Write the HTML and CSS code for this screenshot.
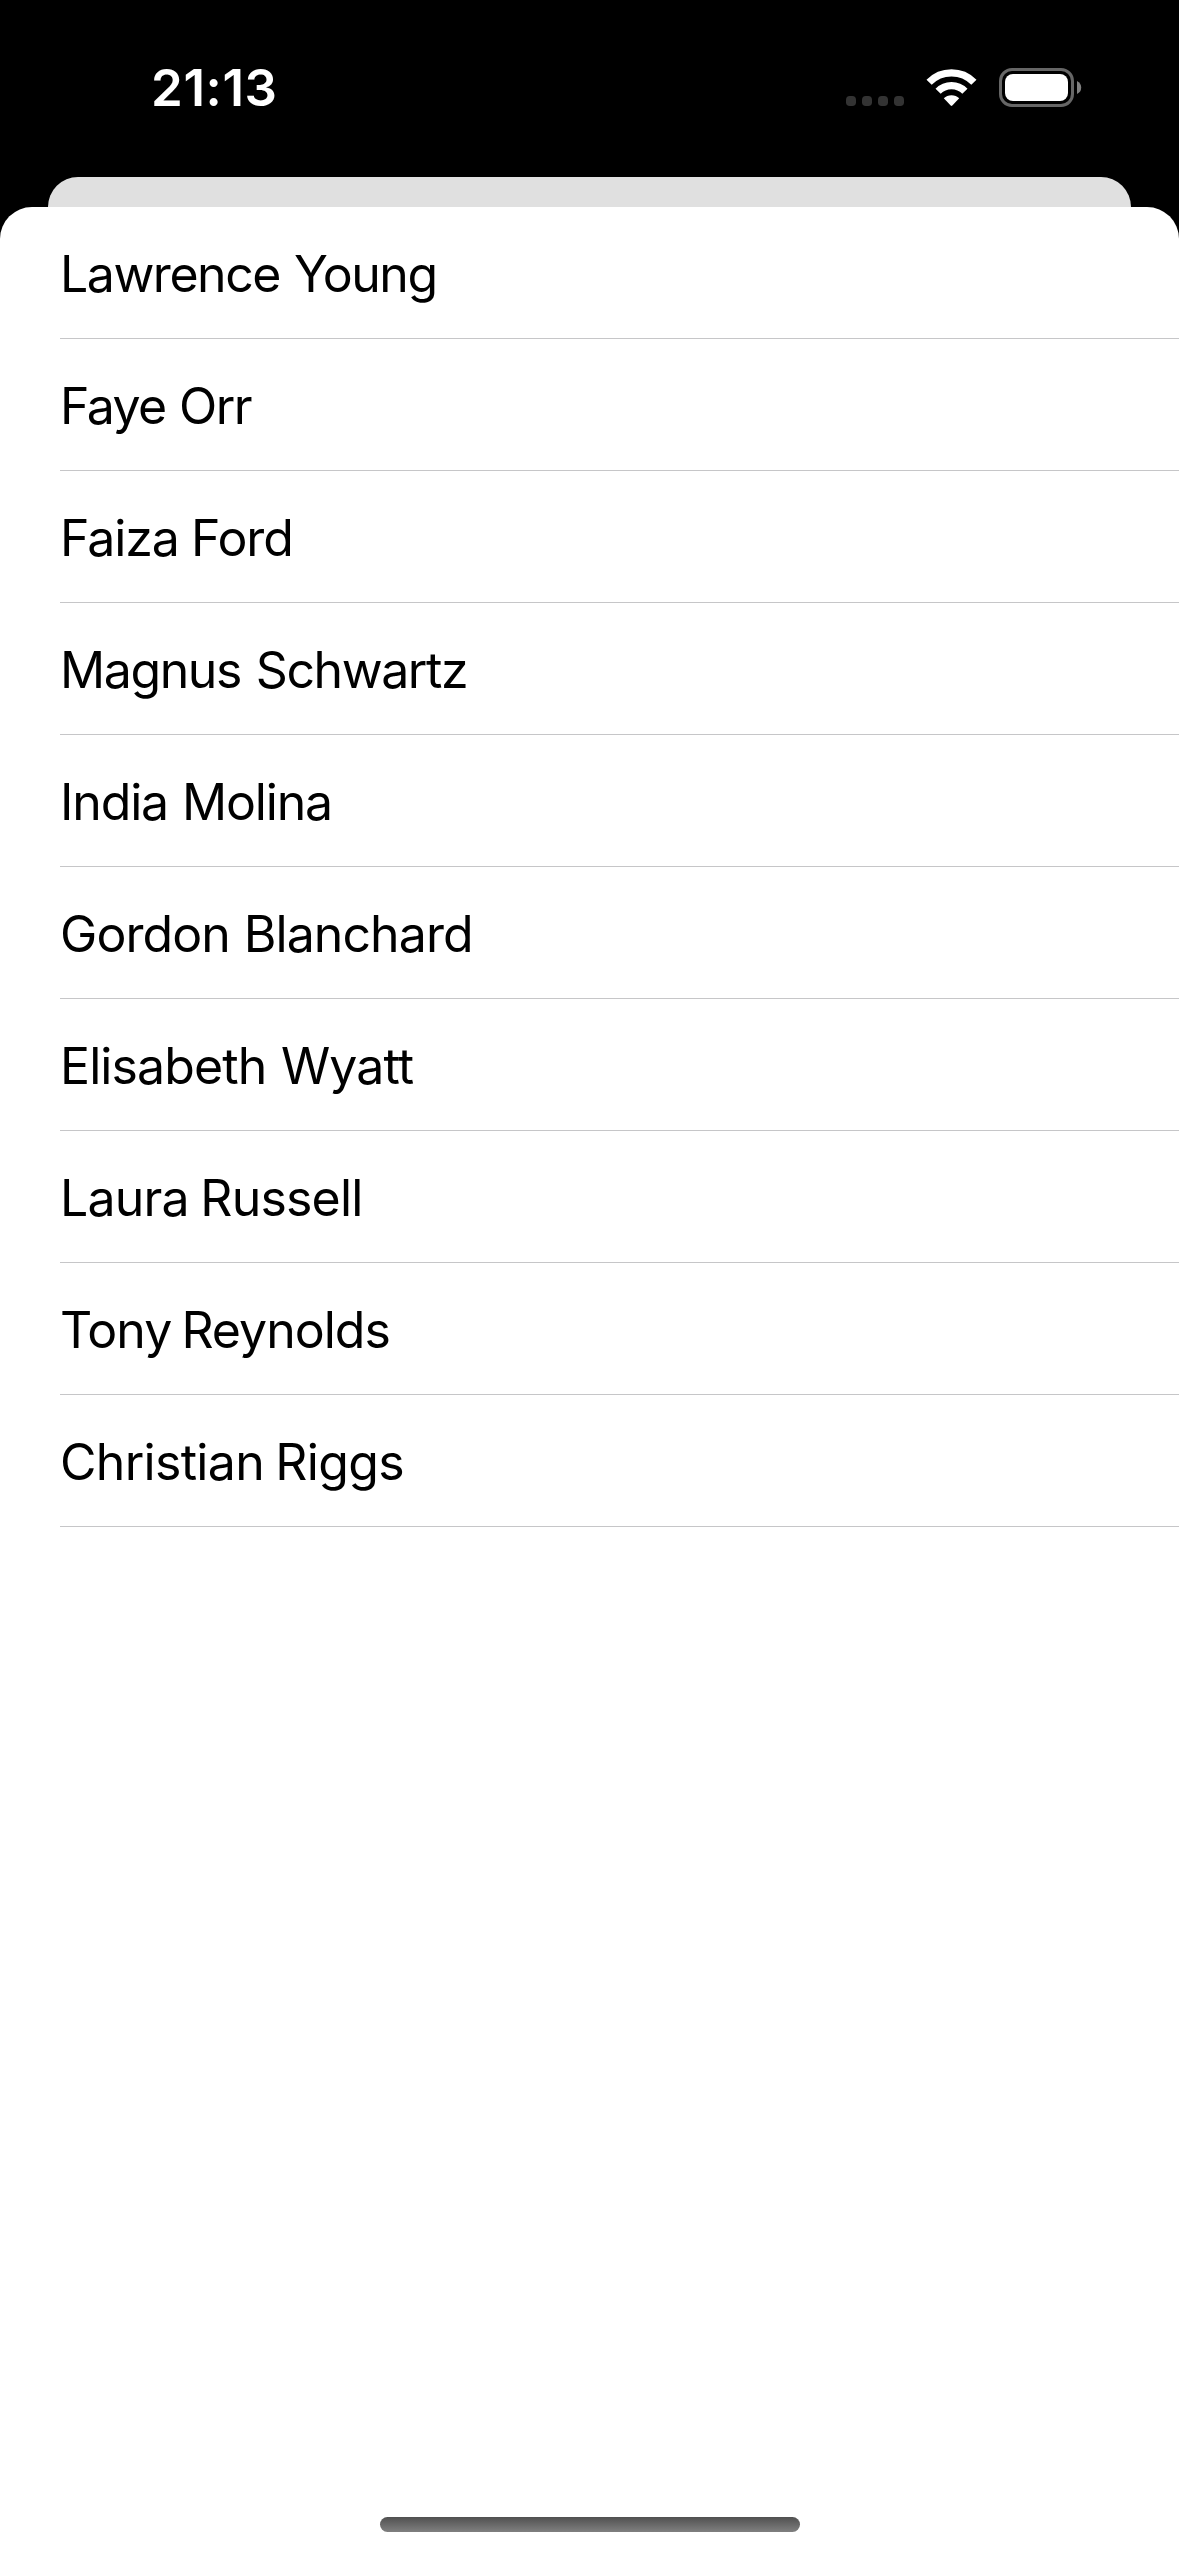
FILE: index.html
```html
<!DOCTYPE html>
<html lang="en">
<head>
<meta charset="utf-8">
<title>Contacts</title>
<link rel="stylesheet" href="styles.css">
</head>
<body>
<div class="screen">
  <header class="status-bar">
    <time class="clock">21:13</time>
    <div class="indicators">
      <svg class="cellular" width="58" height="10" viewBox="0 0 58 10" fill="#333">
        <rect width="10" height="10" rx="3.8"/>
        <rect x="16" width="10" height="10" rx="3.8"/>
        <rect x="32" width="10" height="10" rx="3.8"/>
        <rect x="48" width="10" height="10" rx="3.8"/>
      </svg>
      <svg class="wifi" width="52" height="38" viewBox="0 0 52 38">
        <g fill="none" stroke="#fff" stroke-width="7.3">
          <path d="M3.1 13.2A31.4 31.4 0 0 1 47.9 13.2"/>
          <path d="M12.1 22.2A18.8 18.8 0 0 1 38.9 22.2"/>
        </g>
        <path d="M17.8 29.3A11 11 0 0 1 33.2 29.3L26.3 36.5Q25.5 37.3 24.7 36.5Z" fill="#fff"/>
      </svg>
      <svg class="battery" width="83" height="39" viewBox="0 0 83 39">
        <rect x="1.5" y="1.5" width="72" height="36" rx="11.5" fill="none" stroke="#666" stroke-width="3"/>
        <rect x="6" y="6" width="63" height="27" rx="8" fill="#fff"/>
        <path d="M78 13Q82.2 15 82.2 19.5T78 26Z" fill="#808080"/>
      </svg>
    </div>
  </header>
  <div class="sheet-behind"></div>
  <main class="sheet">
    <ul class="people">
      <li class="person">Lawrence Young</li>
      <li class="person">Faye Orr</li>
      <li class="person">Faiza Ford</li>
      <li class="person">Magnus Schwartz</li>
      <li class="person">India Molina</li>
      <li class="person">Gordon Blanchard</li>
      <li class="person">Elisabeth Wyatt</li>
      <li class="person">Laura Russell</li>
      <li class="person">Tony Reynolds</li>
      <li class="person">Christian Riggs</li>
    </ul>
    <div class="home-indicator"></div>
  </main>
</div>
</body>
</html>
```
FILE: styles.css
```css
* {
  box-sizing: border-box;
}

body {
  margin: 0;
  background: #000;
  font-family: Inter, "Liberation Sans", sans-serif;
}

.screen {
  display: flex;
  flex-direction: column;
  width: 1179px;
  height: 2556px;
  overflow: hidden;
  background: #000;
}

.status-bar {
  display: flex;
  justify-content: space-between;
  align-items: flex-start;
  flex: none;
  height: 177px;
  padding: 68px 97px 0 151px;
}

.clock {
  color: #fff;
  font-size: 51px;
  font-weight: 600;
  line-height: 40px;
  letter-spacing: 0.6px;
}

.indicators {
  display: flex;
  align-items: flex-start;
}

.cellular {
  margin: 28px 22px 0 0;
}

.wifi {
  margin: 1px 21px 0 0;
}

.sheet-behind {
  flex: none;
  height: 30px;
  margin: 0 48px;
  border-radius: 30px 30px 0 0;
  background: #e0e0e0;
}

.sheet {
  display: flex;
  flex: 1;
  flex-direction: column;
  justify-content: space-between;
  align-items: center;
  padding-bottom: 24px;
  border-radius: 32px 32px 0 0;
  background: #fff;
}

.people {
  align-self: stretch;
  margin: 0;
  padding: 0 0 0 60px;
  list-style: none;
}

.person {
  height: 132px;
  padding-top: 37px;
  box-shadow: inset 0 -1px #c6c6c8;
  color: #000;
  font-size: 50px;
  line-height: 60px;
}

.person:nth-child(1) { letter-spacing: -1.47px; word-spacing: 1.6px; }
.person:nth-child(2) { letter-spacing: -1.55px; word-spacing: 0.75px; }
.person:nth-child(3) { letter-spacing: -1.1px; word-spacing: -0.6px; }
.person:nth-child(4) { letter-spacing: -1.42px; word-spacing: 2.2px; }
.person:nth-child(5) { letter-spacing: -1.15px; word-spacing: 1px; }
.person:nth-child(6) { letter-spacing: -0.92px; word-spacing: 0.65px; }
.person:nth-child(7) { letter-spacing: -0.9px; word-spacing: 1.5px; }
.person:nth-child(8) { letter-spacing: -0.8px; word-spacing: -1.8px; }
.person:nth-child(9) { letter-spacing: -1px; word-spacing: -2.9px; }
.person:nth-child(10) { letter-spacing: -0.7px; word-spacing: -2px; }

.home-indicator {
  width: 420px;
  height: 15px;
  border-radius: 7.5px;
  background: linear-gradient(#505050, #808080);
}
```
